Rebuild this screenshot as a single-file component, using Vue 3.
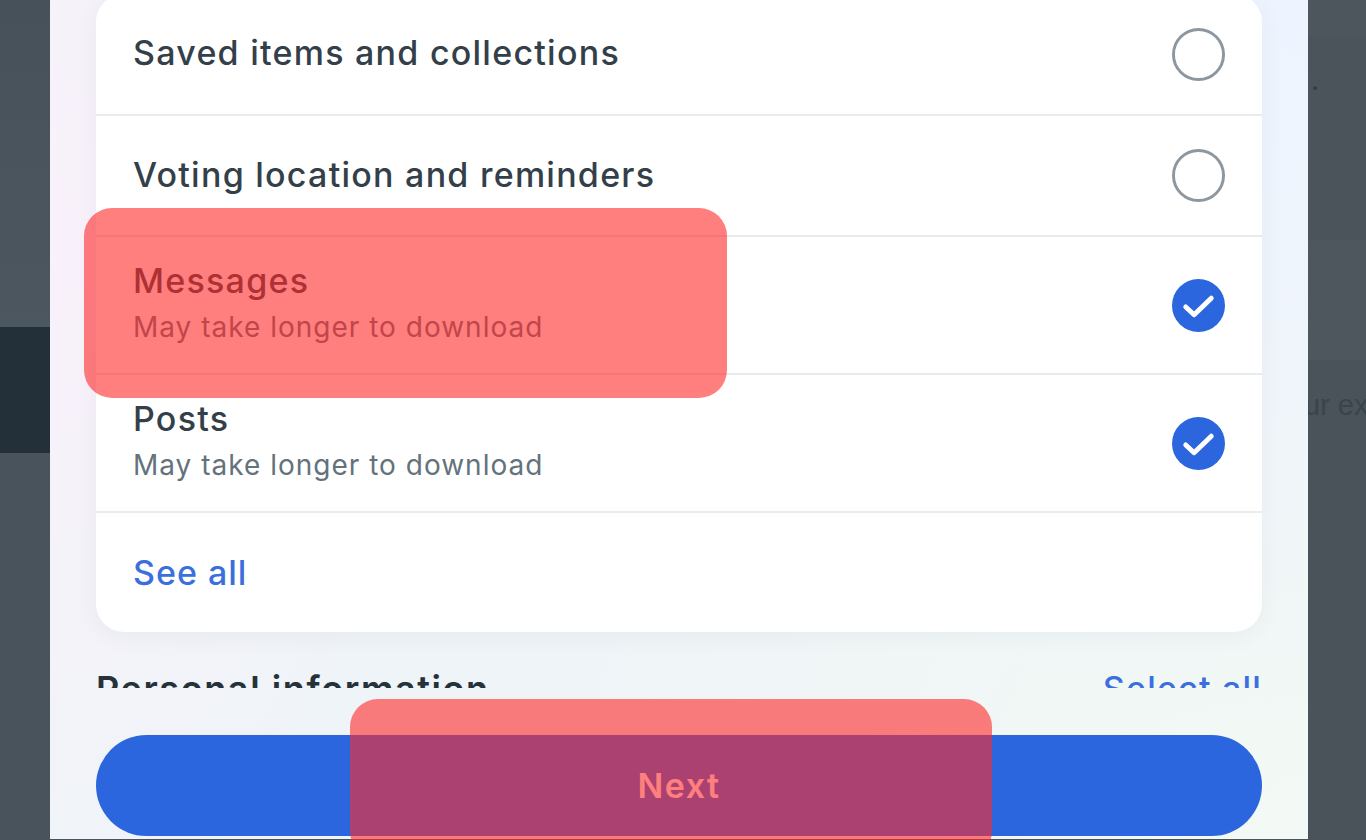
<script setup>
const rows = [
  { id: "saved", title: "Saved items and collections", checked: false },
  { id: "voting", title: "Voting location and reminders", checked: false },
  { id: "messages", title: "Messages", sub: "May take longer to download", checked: true },
  { id: "posts", title: "Posts", sub: "May take longer to download", checked: true },
];
</script>

<template>
  <div class="page">
    <div class="side side-left">
      <div class="band left-top"></div>
      <div class="band left-dark"></div>
      <div class="band left-bottom"></div>
    </div>

    <div class="modal">
      <div class="scroller">
        <div class="card">
          <div
            v-for="row in rows"
            :key="row.id"
            class="row"
            :class="{ tall: row.sub }"
          >
            <div class="row-text">
              <div class="row-title">{{ row.title }}</div>
              <div v-if="row.sub" class="row-sub">{{ row.sub }}</div>
            </div>
            <svg class="radio" viewBox="0 0 54 54">
              <template v-if="row.checked">
                <circle cx="27" cy="27" r="27" fill="#2b66de" />
                <path
                  d="M14 28.5 L22.5 36.5 L40 19.5"
                  fill="none"
                  stroke="#fff"
                  stroke-width="5"
                  stroke-linecap="round"
                  stroke-linejoin="round"
                />
              </template>
              <circle
                v-else
                cx="27"
                cy="27"
                r="25.5"
                fill="#fff"
                stroke="#8d979f"
                stroke-width="3"
              />
            </svg>
          </div>
          <div class="row see-all">See all</div>
        </div>
        <div class="section-head">
          <span class="section-title">Personal information</span>
          <span class="select-all">Select all</span>
        </div>
      </div>

      <div class="footer">
        <button class="next-btn">Next</button>
      </div>
    </div>

    <div class="side side-right">
      <div class="band right-one"></div>
      <div class="band right-two"><span class="dot">.</span></div>
      <div class="band right-three"></div>
      <div class="band right-four"><span class="cut-text">ur ex</span></div>
    </div>

    <div class="mask mask-row"></div>
    <div class="mask mask-btn"></div>
  </div>
</template>

<style scoped>
.page {
  position: relative;
  display: flex;
  width: 1366px;
  height: 840px;
  overflow: hidden;
  background: #4a545b;
  font-family: Inter, "Noto Sans", sans-serif;
}

.side {
  display: flex;
  flex-direction: column;
  flex-shrink: 0;
  overflow: hidden;
}

.side-left {
  width: 50px;
}

.side-right {
  width: 58px;
}

.left-top {
  height: 327px;
  background: linear-gradient(180deg, #46515a 0%, #4c5760 100%);
}

.left-dark {
  height: 126px;
  background: #23303a;
}

.left-bottom {
  flex: 1;
  background: #48535b;
}

.right-one {
  height: 37px;
  background: #4e565d;
}

.right-two {
  height: 203px;
  background: #4b545b;
}

.right-three {
  height: 120px;
  background: #4f575e;
}

.right-four {
  flex: 1;
  background: #4a5359;
}

.dot {
  display: block;
  margin: 29px 0 0 3px;
  font-size: 28px;
  line-height: 28px;
  color: #333d44;
}

.cut-text {
  display: block;
  margin-top: 26px;
  margin-left: -4px;
  font-family: "Liberation Sans", sans-serif;
  font-size: 29px;
  line-height: 38px;
  white-space: nowrap;
  color: #3a444b;
}

.modal {
  display: flex;
  flex-direction: column;
  width: 1258px;
  height: 839px;
  flex-shrink: 0;
  background:
    radial-gradient(circle at 100% 0%, #eef4ff 0%, rgba(238, 244, 255, 0) 50%),
    radial-gradient(ellipse 30% 80% at 0% 30%, #f9f1fb 0%, rgba(249, 241, 251, 0) 100%),
    radial-gradient(circle at 100% 100%, #f3f9f4 0%, rgba(243, 249, 244, 0) 50%),
    #eff4f8;
}

.scroller {
  height: 688px;
  padding: 0 46px;
  box-sizing: border-box;
  overflow: hidden;
  flex-shrink: 0;
}

.card {
  margin-top: -6px;
  background: #fff;
  border-radius: 28px;
  box-shadow: 0 4px 24px rgba(40, 60, 80, 0.05);
}

.row {
  display: flex;
  align-items: center;
  justify-content: space-between;
  height: 121px;
  padding: 0 37px 0 37px;
  box-sizing: border-box;
  border-bottom: 2px solid #e9ecee;
}

.row:first-child {
  height: 122px;
}

.row.tall {
  height: 138px;
}

.row-text {
  margin-top: -2px;
}

.row.tall .row-text {
  margin-top: -5px;
}

.row-title {
  font-size: 34px;
  font-weight: 500;
  line-height: 40px;
  letter-spacing: 1.25px;
  white-space: nowrap;
  color: #33404a;
}

.row-sub {
  margin-top: 9px;
  font-size: 28px;
  line-height: 34px;
  letter-spacing: 1px;
  white-space: nowrap;
  color: #64727c;
}

.radio {
  width: 53px;
  height: 53px;
  flex-shrink: 0;
}

.row.tall .radio {
  margin-top: 1px;
}

.see-all {
  height: 119px;
  border-bottom: 0;
  font-size: 34px;
  font-weight: 500;
  letter-spacing: 1px;
  color: #3a6fdc;
}

.section-head {
  display: flex;
  justify-content: space-between;
  margin-top: 37px;
  line-height: 40px;
}

.section-title {
  font-size: 36px;
  font-weight: 600;
  letter-spacing: 1.6px;
  color: #26323a;
}

.select-all {
  font-size: 34px;
  font-weight: 500;
  letter-spacing: 1.2px;
  color: #3a6fdc;
}

.footer {
  padding: 47px 46px 0;
}

.next-btn {
  display: block;
  width: 100%;
  height: 101px;
  border: 0;
  border-radius: 51px;
  background: #2b66de;
  font-family: inherit;
  font-size: 34px;
  font-weight: 600;
  letter-spacing: 1.5px;
  color: #fff;
}

.mask {
  position: absolute;
  background: rgba(255, 40, 40, 0.6);
  border-radius: 28px;
}

.mask-row {
  left: 84px;
  top: 208px;
  width: 643px;
  height: 190px;
}

.mask-btn {
  left: 350px;
  top: 699px;
  width: 642px;
  height: 160px;
}
</style>

<style>
html,
body {
  margin: 0;
  background: #4a545b;
}
</style>
